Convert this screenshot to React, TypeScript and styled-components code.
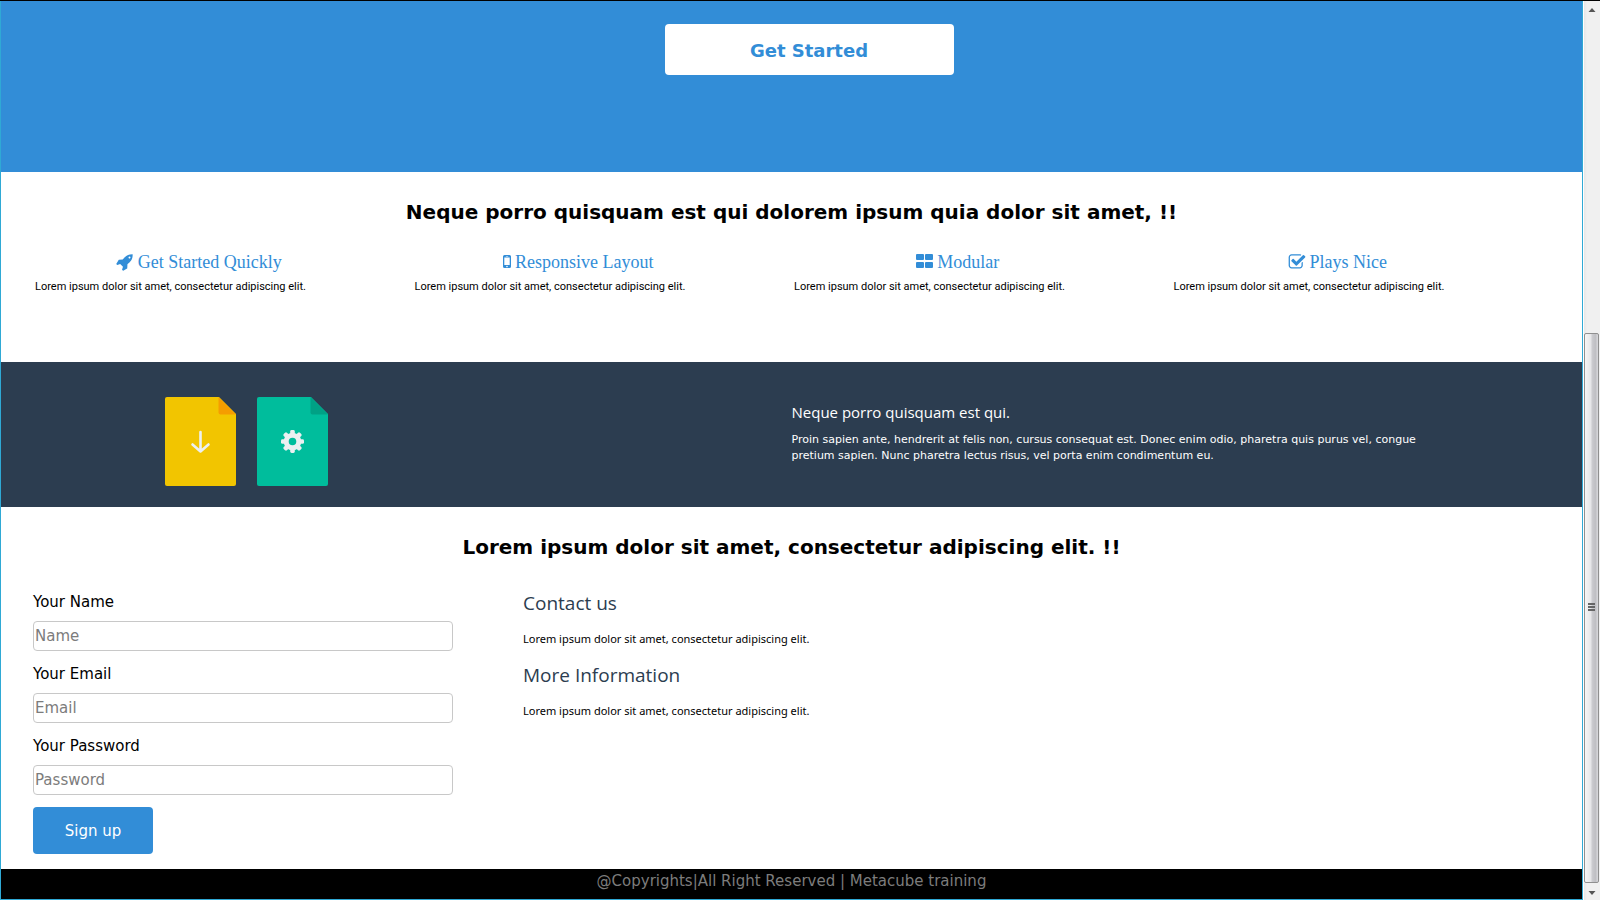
import React from "react";
import styled, { createGlobalStyle } from "styled-components";

const blue = "#328dd7";
const slate = "#2c3d50";
const edge = "#2fa9d5";
const verdana = 'Verdana, "DejaVu Sans", sans-serif';
const openSans = '"Open Sans", "Noto Sans", sans-serif';

const GlobalStyle = createGlobalStyle`
  *, *::before, *::after { box-sizing: border-box; }
  body { margin: 0; background: #fff; color: #000; font-family: ${verdana}; }
  h1, h2, h3, p { margin: 0; font-weight: normal; }
`;

const Window = styled.div`
  display: flex;
  min-height: 100vh;
  border-top: 1px solid #000;
`;

const Page = styled.div`
  flex: 1;
  min-width: 0;
  display: flex;
  flex-direction: column;
  border: 1px solid ${edge};
  border-top: 0;
`;

const Hero = styled.header`
  display: flex;
  justify-content: center;
  padding: 23px 0 97px 35px;
  background: ${blue};
`;

const StartButton = styled.button`
  width: 289px;
  height: 51px;
  padding: 2px 0 0;
  border: 0;
  border-radius: 4px;
  background: #fff;
  color: ${blue};
  font: bold 18px/24px ${verdana};
`;

const SectionTitle = styled.h2`
  font-size: 20px;
  line-height: 28px;
  font-weight: bold;
  text-align: center;
`;

const Features = styled.section`
  padding: 26px 0 64px;
`;

const FeatureRow = styled.div`
  display: grid;
  grid-template-columns: repeat(4, 1fr);
  padding: 23px 29px 0 34px;
`;

const Feature = styled.article`
  padding-right: 52px;
`;

const FeatureTitle = styled.h3`
  display: flex;
  align-items: center;
  justify-content: center;
  gap: 4px;
  color: ${blue};
  font: 18px/26px "Liberation Serif", "Times New Roman", serif;
`;

const FeatureText = styled.p`
  font: 11px/23px Roboto, "Open Sans", sans-serif;
  white-space: nowrap;
`;

const Glyph = styled.svg`
  display: block;
  height: 18px;
  fill: currentColor;
`;

const Banner = styled.section`
  display: grid;
  grid-template-columns: 1fr 1fr;
  background: ${slate};
  color: #fff;
`;

const Files = styled.div`
  display: flex;
  gap: 21px;
  padding: 35px 0 21px 164px;
`;

const FileIcon = styled.svg`
  display: block;
  width: 71px;
  height: 89px;
`;

const BannerCopy = styled.div`
  padding: 39px 128px 0 0;
`;

const BannerTitle = styled.h3`
  font: 15px/22px ${openSans};
`;

const BannerText = styled.p`
  padding-top: 9px;
  font-size: 11px;
  line-height: 16px;
`;

const Signup = styled.section`
  flex: 1;
  padding: 26px 0 15px;
`;

const SignupColumns = styled.div`
  display: flex;
  gap: 70px;
  padding: 30px 32px 0;
`;

const Form = styled.form`
  display: flex;
  flex-direction: column;
  gap: 12px;
  width: 420px;
`;

const Field = styled.label`
  display: flex;
  flex-direction: column;
  gap: 8px;
  font-size: 15px;
  line-height: 22px;
`;

const TextInput = styled.input`
  width: 100%;
  height: 30px;
  padding: 1px;
  border: 1px solid #c8c8c8;
  border-radius: 4px;
  background: #fff;
  font: 15px/20px ${verdana};

  &::placeholder { color: #7c7c7c; opacity: 1; }
`;

const SubmitButton = styled.button`
  width: 120px;
  height: 47px;
  padding: 0;
  border: 0;
  border-radius: 4px;
  background: ${blue};
  color: #fff;
  font: 15px/20px ${verdana};
`;

const Info = styled.div`
  display: flex;
  flex-direction: column;
  gap: 14px;
`;

const InfoTitle = styled.h3`
  color: ${slate};
  font: 19px/24px ${openSans};
`;

const InfoText = styled.p`
  padding-top: 14px;
  font: 11px/20px "Noto Sans", "Open Sans", sans-serif;
`;

const Footer = styled.footer`
  height: 30px;
  background: #000;
  color: #7c7c7c;
  font-size: 15px;
  line-height: 24px;
  text-align: center;
`;

const Scrollbar = styled.aside`
  flex: 0 0 17px;
  display: flex;
  flex-direction: column;
  align-items: flex-start;
  padding-left: 1px;
  background: linear-gradient(90deg, #fff 1px, #e6e6e6 1px, #f0f0f0 4px);
`;

const ScrollCap = styled.svg`
  display: block;
  flex: none;
  width: 16px;
  height: 17px;
`;

const ScrollSpace = styled.div`
  flex: 315 0 0;
`;

const Thumb = styled.div`
  flex: 549 0 0;
  display: flex;
  align-items: center;
  justify-content: center;
  width: 15px;
  border: 1px solid #8f8f8f;
  border-radius: 2px;
  background: linear-gradient(90deg, #f6f6f6 0, #e6e6e8 45%, #cbcbcf 55%, #bfbfc3 80%, #dadadd 100%);
`;

const Grip = styled.svg`
  display: block;
  width: 7px;
  height: 9px;
`;

const lorem = "Lorem ipsum dolor sit amet, consectetur adipiscing elit.";

const RocketIcon = () => (
  <Glyph viewBox="0 0 1792 1792" width="18" aria-hidden="true">
    <path d="M1440 448q0-40-28-68t-68-28-68 28-28 68 28 68 68 28 68-28 28-68zm224-288q0 249-75.5 430.5t-253.5 360.5q-81 80-195 176l-20 379q-2 16-16 26l-384 224q-7 4-16 4-12 0-23-9l-64-64q-13-14-8-32l85-276-281-281-276 85q-3 1-9 1-14 0-23-9l-64-64q-17-19-5-39l224-384q10-14 26-16l379-20q96-114 176-195 188-187 358-258t431-71q14 0 24 9.5t10 22.5z" />
  </Glyph>
);

const PhoneIcon = () => (
  <Glyph viewBox="0 0 8 18" width="8" aria-hidden="true">
    <path fillRule="evenodd" d="M1.500 2h5Q8 2 8 3.500v10Q8 15 6.500 15h-5Q0 15 0 13.500v-10Q0 2 1.500 2zM1.300 4.500v7.500h5.400V4.500zM2.800 3v.6h2.400V3zM4 12.800a.8.8 0 1 0 0 1.600a.8.8 0 1 0 0-1.600z" />
  </Glyph>
);

const GridIcon = () => (
  <Glyph viewBox="0 0 17 18" width="17" aria-hidden="true">
    <rect x="0" y="1" width="8" height="6" rx="1" />
    <rect x="9" y="1" width="8" height="6" rx="1" />
    <rect x="0" y="9" width="8" height="6" rx="1" />
    <rect x="9" y="9" width="8" height="6" rx="1" />
  </Glyph>
);

const CheckIcon = () => (
  <Glyph viewBox="0 0 1792 1792" width="18" aria-hidden="true">
    <path d="M1472 930v318q0 119-84.5 203.5t-203.5 84.5h-832q-119 0-203.5-84.5t-84.5-203.5v-832q0-119 84.5-203.5t203.5-84.5h832q63 0 117 25 15 7 18 23 3 17-9 29l-49 49q-10 10-23 10-3 0-9-2-23-6-45-6h-832q-66 0-113 47t-47 113v832q0 66 47 113t113 47h832q66 0 113-47t47-113v-254q0-13 9-22l64-64q10-10 23-10 6 0 12 3 20 8 20 29zm231-489l-814 814q-24 24-57 24t-57-24l-430-430q-24-24-24-57t24-57l110-110q24-24 57-24t57 24l263 263 647-647q24-24 57-24t57 24l110 110q24 24 24 57t-24 57z" />
  </Glyph>
);

const features = [
  { title: "Get Started Quickly", Icon: RocketIcon },
  { title: "Responsive Layout", Icon: PhoneIcon },
  { title: "Modular", Icon: GridIcon },
  { title: "Plays Nice", Icon: CheckIcon },
];

const fields = [
  { id: "name", type: "text", label: "Name" },
  { id: "email", type: "email", label: "Email" },
  { id: "password", type: "password", label: "Password" },
];

const info = ["Contact us", "More Information"];

const filePath = "M2 0H54L71 17V87Q71 89 69 89H2Q0 89 0 87V2Q0 0 2 0z";
const foldPath = "M53.500 0L71 17.500H55.500Q53.500 17.500 53.500 15.500z";
const teeth = [0, 45, 90, 135, 180, 225, 270, 315];

const DownloadFile = () => (
  <FileIcon viewBox="0 0 71 89" aria-hidden="true">
    <path d={filePath} fill="#f2c500" />
    <path d={foldPath} fill="#f59d00" />
    <path d="M35.500 35V54M27.500 47.500L35.500 54.500L43.500 47.500" fill="none" stroke="#ecf0f1" strokeWidth="2.600" strokeLinecap="round" strokeLinejoin="round" />
  </FileIcon>
);

const SettingsFile = () => (
  <FileIcon viewBox="0 0 71 89" aria-hidden="true">
    <path d={filePath} fill="#00bd9c" />
    <path d={foldPath} fill="#00a185" />
    <g transform="translate(35.500 44.500)">
      <circle r="6.300" fill="none" stroke="#ecf0f1" strokeWidth="5" />
      {teeth.map((angle) => (
        <rect key={angle} x="-2.300" y="-11.500" width="4.600" height="5" rx="1.400" fill="#ecf0f1" transform={`rotate(${angle})`} />
      ))}
    </g>
  </FileIcon>
);

export default function App() {
  return (
    <>
      <GlobalStyle />
      <Window>
        <Page>
          <Hero>
            <StartButton type="button">Get Started</StartButton>
          </Hero>

          <Features>
            <SectionTitle>Neque porro quisquam est qui dolorem ipsum quia dolor sit amet, !!</SectionTitle>
            <FeatureRow>
              {features.map(({ title, Icon }) => (
                <Feature key={title}>
                  <FeatureTitle>
                    <Icon />
                    {title}
                  </FeatureTitle>
                  <FeatureText>{lorem}</FeatureText>
                </Feature>
              ))}
            </FeatureRow>
          </Features>

          <Banner>
            <Files>
              <DownloadFile />
              <SettingsFile />
            </Files>
            <BannerCopy>
              <BannerTitle>Neque porro quisquam est qui.</BannerTitle>
              <BannerText>
                Proin sapien ante, hendrerit at felis non, cursus consequat est. Donec enim odio, pharetra quis purus vel, congue
                pretium sapien. Nunc pharetra lectus risus, vel porta enim condimentum eu.
              </BannerText>
            </BannerCopy>
          </Banner>

          <Signup>
            <SectionTitle>Lorem ipsum dolor sit amet, consectetur adipiscing elit. !!</SectionTitle>
            <SignupColumns>
              <Form onSubmit={(event) => event.preventDefault()}>
                {fields.map(({ id, type, label }) => (
                  <Field key={id} htmlFor={id}>
                    Your {label}
                    <TextInput id={id} type={type} placeholder={label} />
                  </Field>
                ))}
                <SubmitButton type="submit">Sign up</SubmitButton>
              </Form>
              <Info>
                {info.map((title) => (
                  <div key={title}>
                    <InfoTitle>{title}</InfoTitle>
                    <InfoText>{lorem}</InfoText>
                  </div>
                ))}
              </Info>
            </SignupColumns>
          </Signup>

          <Footer>@Copyrights|All Right Reserved | Metacube training</Footer>
        </Page>

        <Scrollbar aria-hidden="true">
          <ScrollCap viewBox="0 0 16 17">
            <path d="M4.500 11L8 7L11.500 11z" fill="#555" />
          </ScrollCap>
          <ScrollSpace />
          <Thumb>
            <Grip viewBox="0 0 7 9">
              <path d="M0 1H7M0 4H7M0 7H7" stroke="#666" strokeWidth="2" />
            </Grip>
          </Thumb>
          <ScrollCap viewBox="0 0 16 17">
            <path d="M4.500 8L8 12L11.500 8z" fill="#555" />
          </ScrollCap>
        </Scrollbar>
      </Window>
    </>
  );
}
